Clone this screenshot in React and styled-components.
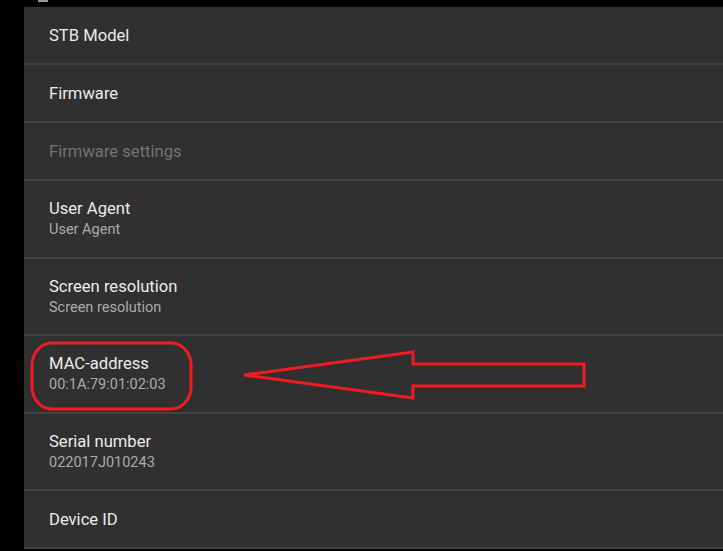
import React from "react";
import styled, { createGlobalStyle } from "styled-components";

const GlobalStyle = createGlobalStyle`
  html, body {
    margin: 0;
    padding: 0;
    background: #000;
    font-family: Roboto, "Liberation Sans", sans-serif;
    overflow: hidden;
  }
`;

const Screen = styled.div`
  position: relative;
  width: 723px;
  height: 551px;
  background: #000;
  overflow: hidden;
`;

const TopStrip = styled.div`
  height: 7px;
  display: flex;
  align-items: flex-start;
  padding-left: 38px;
`;

const StatusNub = styled.span`
  display: block;
  width: 10px;
  height: 2px;
  background: #9a9a9a;
`;

const Panel = styled.div`
  margin-left: 24px;
  background: #303030;
  display: flex;
  flex-direction: column;
`;

const Row = styled.div`
  box-sizing: border-box;
  height: ${p => (p.$sub ? 77.5 : 58)}px;
  border-bottom: 2px solid #424242;
  padding: 2px 25px 0;
  display: flex;
  flex-direction: column;
  justify-content: center;
`;

const Title = styled.div`
  font-size: 16.6px;
  line-height: 20px;
  color: ${p => (p.$disabled ? "#747474" : "#ebebeb")};
`;

const Subtitle = styled.div`
  font-size: 14.5px;
  line-height: 21px;
  color: #ababab;
`;

const Annotation = styled.svg`
  position: absolute;
  left: 0;
  top: 0;
  pointer-events: none;
`;

const items = [
  { title: "STB Model" },
  { title: "Firmware" },
  { title: "Firmware settings", disabled: true },
  { title: "User Agent", sub: "User Agent" },
  { title: "Screen resolution", sub: "Screen resolution" },
  { title: "MAC-address", sub: "00:1A:79:01:02:03" },
  { title: "Serial number", sub: "022017J010243" },
  { title: "Device ID" },
];

export default function App() {
  return (
    <>
      <GlobalStyle />
      <Screen>
        <TopStrip>
          <StatusNub />
        </TopStrip>
        <Panel>
          {items.map(it => (
            <Row key={it.title} $sub={!!it.sub}>
              <Title $disabled={it.disabled}>{it.title}</Title>
              {it.sub && <Subtitle>{it.sub}</Subtitle>}
            </Row>
          ))}
        </Panel>
        <Annotation width="723" height="551" viewBox="0 0 723 551">
          <rect
            x="32"
            y="343"
            width="159"
            height="66"
            rx="20"
            ry="22"
            fill="none"
            stroke="#ee1c25"
            strokeWidth="3"
          />
          <polygon
            points="244,375 413,352 413,364 584,364 584,386 413,386 413,398"
            fill="none"
            stroke="#ee1c25"
            strokeWidth="3"
            strokeLinejoin="miter"
          />
        </Annotation>
      </Screen>
    </>
  );
}
